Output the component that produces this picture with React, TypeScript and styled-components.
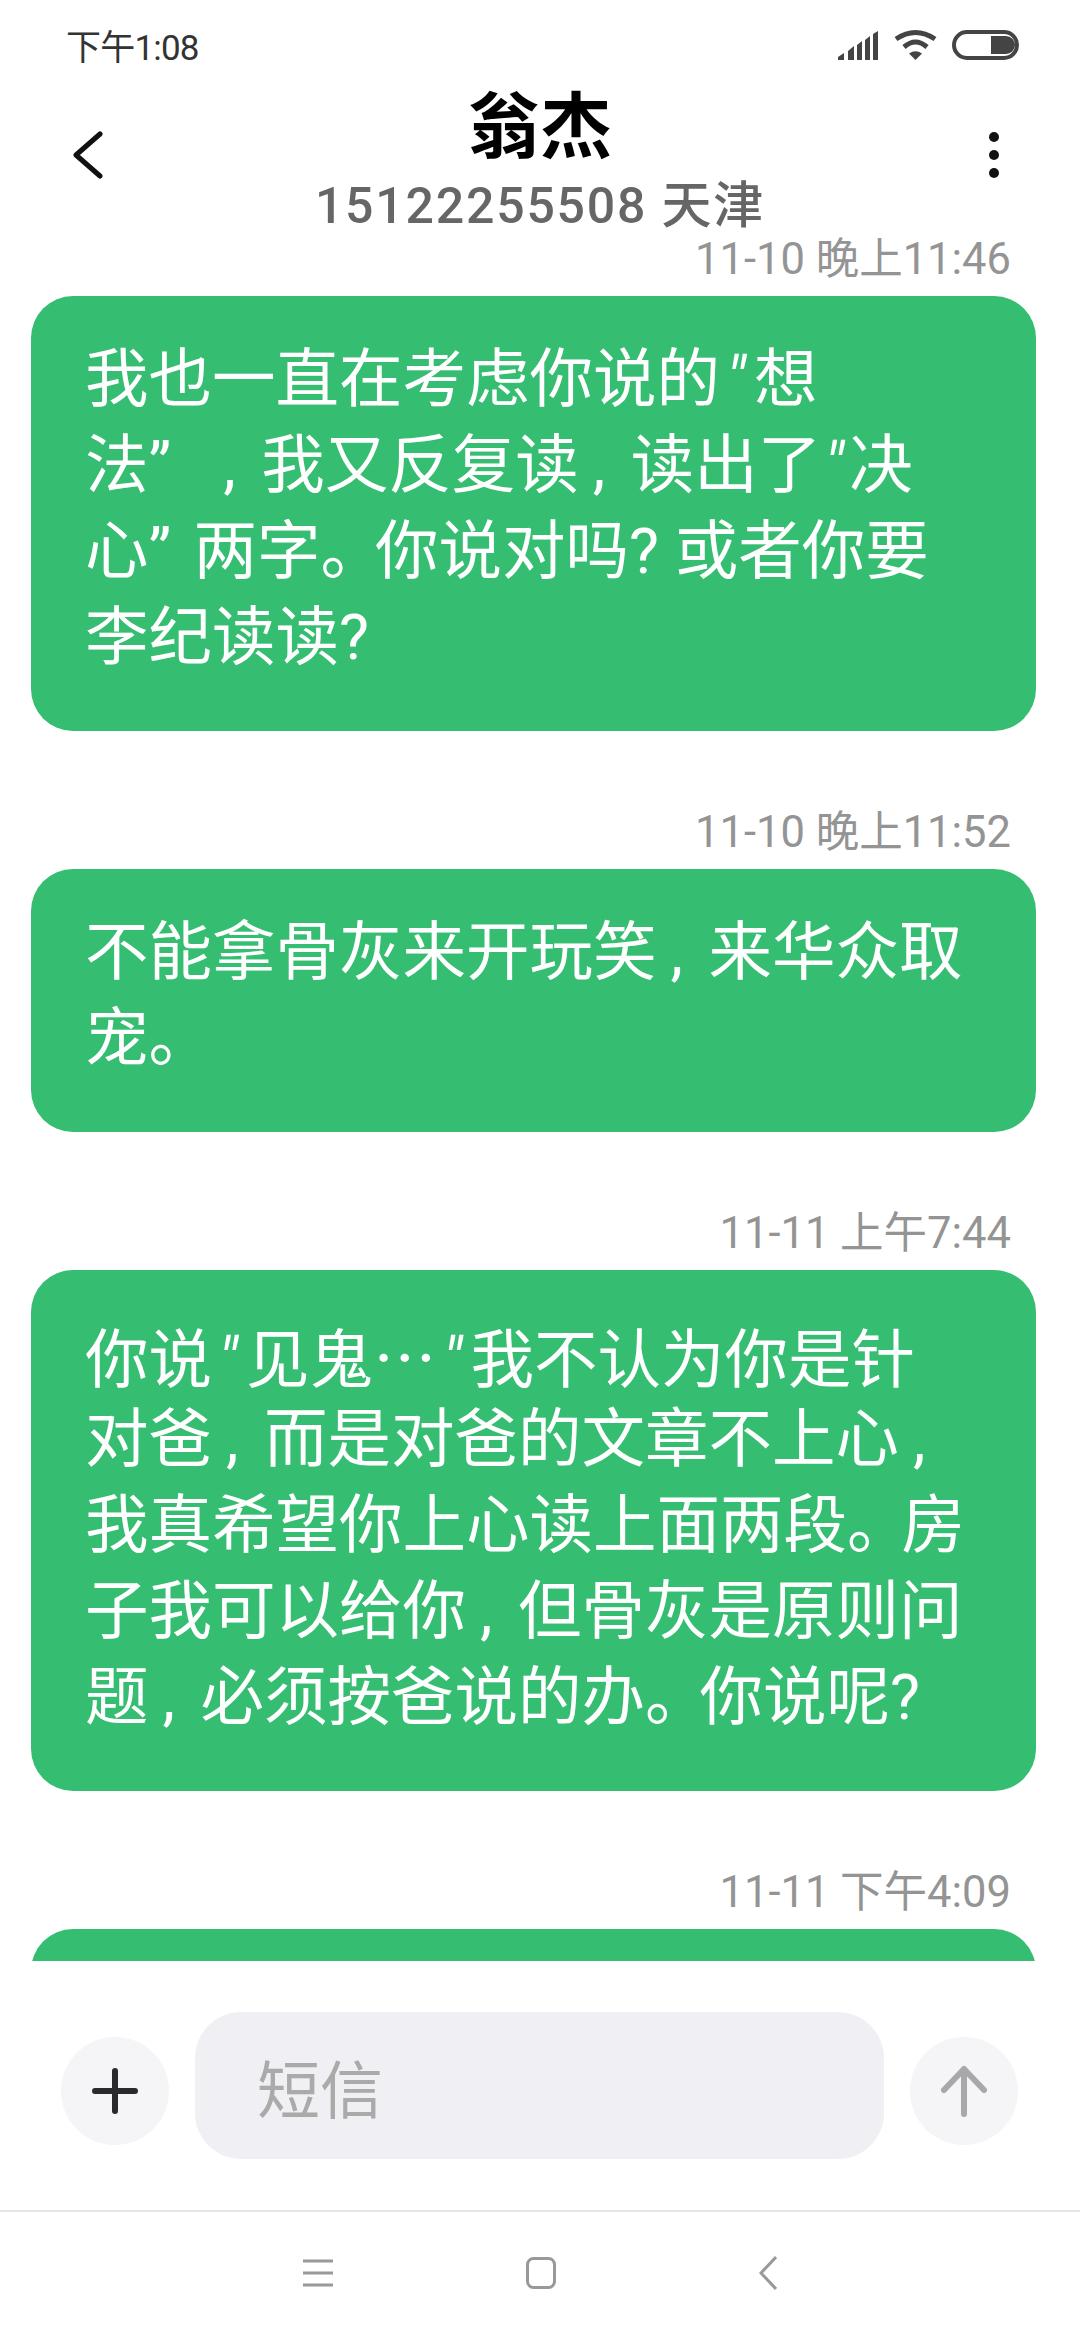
import React from "react";
import styled, { createGlobalStyle } from "styled-components";

const GlobalStyle = createGlobalStyle`
  html, body {
    margin: 0;
    padding: 0;
    background: #fff;
  }
  * {
    box-sizing: border-box;
  }
`;

const FONT = `Roboto, "Noto Sans CJK SC", sans-serif`;

const Screen = styled.div`
  width: 1080px;
  height: 2340px;
  display: flex;
  flex-direction: column;
  background: #fff;
  font-family: ${FONT};
  overflow: hidden;
`;

const StatusBar = styled.div`
  height: 85px;
  flex: none;
  display: flex;
  align-items: center;
  justify-content: space-between;
  padding: 4px 61px 0 66px;
`;

const StatusTime = styled.span`
  font-size: 35px;
  letter-spacing: -0.8px;
  color: #333;
`;

const StatusIcons = styled.div`
  display: flex;
  align-items: center;
  gap: 15px;
`;

const Header = styled.div`
  height: 150px;
  flex: none;
  display: grid;
  grid-template-columns: 140px 1fr 140px;
  align-items: center;
`;

const HeaderSide = styled.div<{ $end?: boolean }>`
  display: flex;
  margin-bottom: 10px;
  justify-content: ${(p) => (p.$end ? "flex-end" : "flex-start")};
  padding: 0 ${(p) => (p.$end ? "80px" : "0")} 0 ${(p) => (p.$end ? "0" : "72px")};
`;

const HeaderTitle = styled.div`
  display: flex;
  flex-direction: column;
  align-items: center;
`;

const Name = styled.div`
  font-size: 72px;
  line-height: 84px;
  font-weight: 700;
  color: #000;
  margin-bottom: 7px;
`;

const PhoneNumber = styled.div`
  font-size: 50px;
  line-height: 58px;
  font-weight: 500;
  letter-spacing: 1.8px;
  color: #666;
`;

const Thread = styled.div`
  flex: 1;
  min-height: 0;
  overflow: hidden;
  padding: 0 44px 0 31px;
`;

const Stamp = styled.div`
  font-size: 43.5px;
  line-height: 50px;
  color: #949494;
  text-align: right;
  padding-right: 25px;
  margin-bottom: 11px;
`;

const Bubble = styled.div`
  background: #35bd71;
  color: #fff;
  border-radius: 42px;
  padding: 41px 20px 50px 54px;
  margin-bottom: 77px;
  font-size: 63.5px;
  white-space: pre;
`;

const Line = styled.div`
  height: 86px;
  line-height: 86px;
`;

const Punct = styled.span<{ $width: number; $inset?: number; $slant?: boolean }>`
  display: inline-block;
  width: ${(p) => p.$width}px;
  padding-left: ${(p) => p.$inset ?? 0}px;
  line-height: 1;
  font-style: ${(p) => (p.$slant ? "italic" : "normal")};
`;

const Period = styled.span`
  letter-spacing: -9px;
`;

const Ellipsis = styled.span`
  font-family: "Noto Sans CJK SC", sans-serif;
`;

const Composer = styled.div`
  height: 249px;
  flex: none;
  display: flex;
  align-items: center;
  padding: 0 62px 0 61px;
  gap: 26px;
`;

const RoundButton = styled.div`
  width: 108px;
  height: 108px;
  flex: none;
  margin-top: 10px;
  border-radius: 50%;
  background: #f5f5f7;
  display: flex;
  align-items: center;
  justify-content: center;
`;

const Input = styled.div`
  flex: 1;
  height: 147px;
  border-radius: 46px;
  background: #f0f0f4;
  display: flex;
  align-items: center;
  padding-left: 62px;
  font-size: 63px;
  color: #aaa;
`;

const NavBar = styled.div`
  height: 130px;
  flex: none;
  border-top: 2px solid #e6e6e6;
  display: flex;
  align-items: center;
  justify-content: center;
  gap: 193px;
  padding-bottom: 6px;

  svg:last-child {
    margin-left: 10px;
  }
`;

// ″ is an open quote with air around it, ‶ the tighter one before 决
const messages = [
  {
    time: "11-10 晚上11:46",
    lines: ["我也一直在考虑你说的″想", "法” ，我又反复读，读出了‶决", "心”两字。你说对吗? 或者你要", "李纪读读?"],
  },
  {
    time: "11-10 晚上11:52",
    lines: ["不能拿骨灰来开玩笑，来华众取", "宠。"],
  },
  {
    time: "11-11 上午7:44",
    lines: [
      "你说″见鬼…″我不认为你是针",
      "对爸，而是对爸的文章不上心，",
      "我真希望你上心读上面两段。房",
      "子我可以给你，但骨灰是原则问",
      "题，必须按爸说的办。你说呢?",
    ],
  },
  { time: "11-11 下午4:09", lines: ["　"] },
];

// the phone's font sets punctuation narrower than a full em
const renderLine = (line: string) =>
  line.split(/([，。″‶”…])/).map((part, i) => {
    switch (part) {
      case "，":
        return <Punct key={i} $width={52} $inset={14}>,</Punct>;
      case "。":
        return <Period key={i}>。</Period>;
      case "″":
        return <Punct key={i} $width={34} $inset={6} $slant>"</Punct>;
      case "‶":
        return <Punct key={i} $width={28} $inset={3} $slant>"</Punct>;
      case "”":
        return <Punct key={i} $width={45}>”</Punct>;
      case "…":
        return <Ellipsis key={i}>…</Ellipsis>;
      default:
        return part;
    }
  });

const App: React.FC = () => (
  <Screen>
    <GlobalStyle />
    <StatusBar>
      <StatusTime>下午1:08</StatusTime>
      <StatusIcons>
        <svg width="41" height="30" viewBox="0 0 41 30" fill="#444">
          <path d="M0 30v-3l6-4v7zM10 30v-9l6-5v14zM19 30V15l5-4v19zM27 30V10l5-4v24zM35 30V4l5-3v29z" />
        </svg>
        <svg width="43" height="31" viewBox="0 0 43 31" fill="none" stroke="#444" strokeWidth="5">
          <path d="M2 10Q21.5-3 41 10M10 18Q21.5 8 33 18" />
          <path d="M21.5 31l-6.500-6.500Q21.500 20 28 24.500z" fill="#444" stroke="none" />
        </svg>
        <svg width="67" height="30" viewBox="0 0 67 30">
          <rect x="2" y="2" width="63" height="26" rx="13" fill="none" stroke="#444" strokeWidth="4" />
          <path d="M39 6h15a9 9 0 0 1 0 18H39z" fill="#444" />
        </svg>
      </StatusIcons>
    </StatusBar>
    <Header>
      <HeaderSide>
        <svg width="32" height="48" viewBox="0 0 32 48" fill="none" stroke="#111" strokeWidth="5" strokeLinecap="round" strokeLinejoin="round">
          <path d="M28 3 4 24l24 21" />
        </svg>
      </HeaderSide>
      <HeaderTitle>
        <Name>翁杰</Name>
        <PhoneNumber>15122255508 天津</PhoneNumber>
      </HeaderTitle>
      <HeaderSide $end>
        <svg width="12" height="48" viewBox="0 0 12 48" fill="#111">
          <circle cx="6" cy="6" r="5" />
          <circle cx="6" cy="24" r="5" />
          <circle cx="6" cy="42" r="5" />
        </svg>
      </HeaderSide>
    </Header>
    <Thread>
      {messages.map((m) => (
        <React.Fragment key={m.time}>
          <Stamp>{m.time}</Stamp>
          <Bubble>
            {m.lines.map((line) => (
              <Line key={line}>{renderLine(line)}</Line>
            ))}
          </Bubble>
        </React.Fragment>
      ))}
    </Thread>
    <Composer>
      <RoundButton>
        <svg width="46" height="46" viewBox="0 0 46 46" stroke="#2a2a2e" strokeWidth="6" strokeLinecap="round">
          <path d="M23 3v40M3 23h40" />
        </svg>
      </RoundButton>
      <Input>短信</Input>
      <RoundButton>
        <svg width="46" height="52" viewBox="0 0 46 52" fill="none" stroke="#a8a8ac" strokeWidth="6" strokeLinecap="round" strokeLinejoin="round">
          <path d="M23 49V4M3 25 23 4l20 21" />
        </svg>
      </RoundButton>
    </Composer>
    <NavBar>
      <svg width="30" height="28" viewBox="0 0 30 28" stroke="#999" strokeWidth="3">
        <path d="M0 2h30M0 14h30M0 26h30" />
      </svg>
      <svg width="30" height="32" viewBox="0 0 30 32" fill="none" stroke="#999" strokeWidth="3">
        <rect x="1.500" y="1.500" width="27" height="29" rx="6" />
      </svg>
      <svg width="18" height="34" viewBox="0 0 18 34" fill="none" stroke="#999" strokeWidth="3">
        <path d="M17 1 2 17l15 16" />
      </svg>
    </NavBar>
  </Screen>
);

export default App;
